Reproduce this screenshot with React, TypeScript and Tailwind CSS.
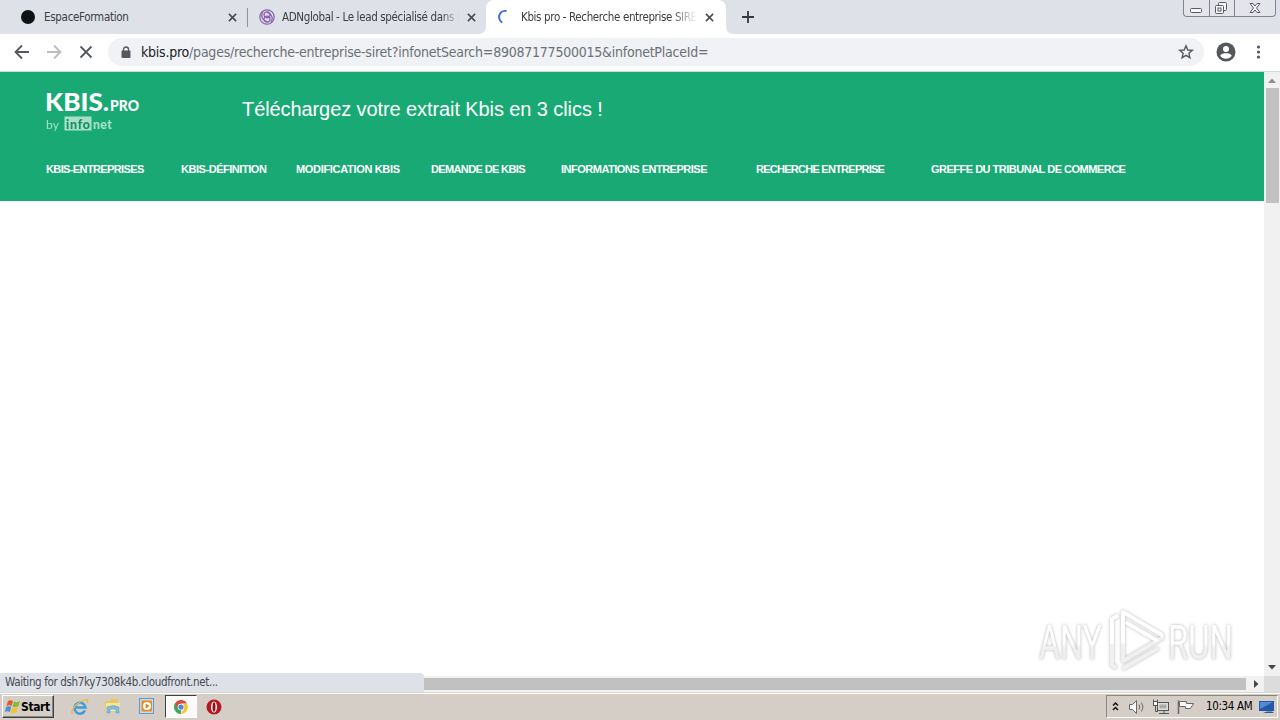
import React from 'react';

const ui = "font-['DejaVu_Sans_Condensed','DejaVu_Sans',sans-serif] [font-stretch:condensed] whitespace-nowrap";

function Cross({ className }: { className: string }) {
  return (
    <svg className={className} viewBox="0 0 10 10" stroke="#45494d" strokeWidth="1.7">
      <path d="M1 1L9 9M9 1L1 9" />
    </svg>
  );
}

function TabStrip() {
  return (
    <div className="relative flex h-[34px] w-full bg-[#dee1e8]">
      <div className="flex h-[34px] w-[247px] items-center pl-[21px]">
        <span className="size-[14px] rounded-full bg-[#0d1214]" />
        <span className={`${ui} ml-[9px] w-[184px] text-[11.5px] leading-4 tracking-[-0.3px] text-[#3c4043]`}>EspaceFormation</span>
        <Cross className="size-[9px]" />
      </div>
      <div className="mt-2 h-[19px] w-px bg-[#8d9198]" />
      <div className="flex h-[34px] w-[238px] items-center pl-[11px]">
        <svg className="size-4" viewBox="0 0 16 16" fill="none" stroke="#8a5fae" strokeWidth="1.2">
          <circle cx="8" cy="8" r="7.2" />
          <circle cx="8" cy="5.800" r="3" />
          <circle cx="8" cy="10.200" r="3" />
          <path d="M4 3C1 7 4 12 8 12.500M12 13C15 9 12 4 8 3.500" />
        </svg>
        <span className={`${ui} ml-[7px] w-[177px] overflow-hidden text-[11.5px] leading-4 tracking-[-0.35px] text-[#3c4043] [mask-image:linear-gradient(to_right,black_90%,transparent)]`}>ADNglobal - Le lead spécialisé dans la</span>
        <Cross className="ml-[8px] size-[9px]" />
      </div>
      <div className="relative flex h-[34px] w-[240px] items-center rounded-t-lg bg-white pl-[12px]">
        <svg className="absolute bottom-0 -left-2 size-2" viewBox="0 0 8 8"><path d="M8 0V8H0Q8 8 8 0" fill="white" /></svg>
        <svg className="absolute -right-2 bottom-0 size-2" viewBox="0 0 8 8"><path d="M0 0V8H8Q0 8 0 0" fill="white" /></svg>
        <svg className="size-4" viewBox="0 0 16 16" fill="none" stroke="#3b6fdc" strokeWidth="2"><path d="M8.500 2A6.200 6.200 0 0 0 4.300 13.500" /></svg>
        <span className={`${ui} ml-[7px] w-[176px] overflow-hidden text-[11.5px] leading-4 tracking-[-0.37px] text-[#3c4043] [mask-image:linear-gradient(to_right,black_85%,transparent)]`}>Kbis pro - Recherche entreprise SIRET</span>
        <Cross className="ml-[8px] size-[9px]" />
      </div>
      <svg className="mt-[11px] ml-4 size-3" viewBox="0 0 12 12" stroke="#35383c" strokeWidth="1.8"><path d="M6 0V12M0 6H12" /></svg>
      <div className="mr-[4px] ml-auto flex h-[17px] w-[93px] rounded-b-[4px] border border-t-0 border-[#80848e] bg-[#e3e5ea]">
        <svg className="h-4 w-[91px]" viewBox="0 0 91 16" fill="none" stroke="#565b65">
          <path d="M25.500 0V16M50.500 0V16" stroke="#80848e" />
          <rect x="6.500" y="8.500" width="11" height="4" rx="1" fill="#f6f6f8" />
          <rect x="34.500" y="2.500" width="8" height="8" rx="1" fill="#f6f6f8" />
          <rect x="31.500" y="5.500" width="8" height="8" rx="1" fill="#f6f6f8" />
          <rect x="34" y="8" width="3" height="3" />
          <path d="M66 3.500h3l2 2.500 2-2.500h3l-3.500 4.500 3.500 4.500h-3l-2-2.500-2 2.500h-3l3.500-4.500z" fill="#f6f6f8" />
        </svg>
      </div>
    </div>
  );
}

function Toolbar() {
  return (
    <div className="flex h-[38px] w-full items-center border-b border-[#c9dfd6] bg-white pb-px">
      <svg className="ml-[14px] h-4 w-20" viewBox="0 0 80 16" fill="none" strokeWidth="1.8">
        <path d="M15 8H2M8 1.500L1.500 8L8 14.500" stroke="#54575b" />
        <path d="M33 8H46M40 1.500L46.500 8L40 14.500" stroke="#bbbdc0" />
        <path d="M66.500 2.500L77.500 13.500M77.500 2.500L66.500 13.500" stroke="#54575b" />
      </svg>
      <div className="ml-[14px] flex h-[28px] w-[1096px] items-center rounded-full bg-[#f0f2f5] pl-[13px]">
        <svg className="h-3 w-[10px]" viewBox="0 0 10 12"><path d="M2.500 5V3.500a2.500 2.500 0 0 1 5 0V5" fill="none" stroke="#55585c" strokeWidth="1.400" /><rect x=".5" y="4.500" width="9" height="7.500" rx="1" fill="#55585c" /></svg>
        <span className="ml-[10px] font-['DejaVu_Sans_Condensed','DejaVu_Sans',sans-serif] text-[14px] font-extralight tracking-[-0.23px] whitespace-nowrap text-[#6c7076] [font-stretch:condensed]">
          <span className="text-[#202124]">kbis.pro</span>/pages/recherche-entreprise-siret?infonetSearch=89087177500015&amp;infonetPlaceId=
        </span>
        <svg className="mr-[10px] ml-auto size-4" viewBox="0 0 16 16" fill="none" stroke="#55585c" strokeWidth="1.400"><path d="M8 1.800L9.800 6 14.300 6.400 10.900 9.300 11.900 13.700 8 11.400 4.100 13.700 5.100 9.300 1.700 6.400 6.200 6Z" /></svg>
      </div>
      <svg className="ml-3 size-5" viewBox="0 0 20 20"><circle cx="10" cy="10" r="9.500" fill="#54575b" /><circle cx="10" cy="7" r="3" fill="white" /><path d="M4.200 13.700C5 11.500 8 11.200 10 11.200S15 11.500 15.800 13.700A7 7 0 0 1 4.200 13.700" fill="white" /></svg>
      <svg className="ml-[20px] h-4 w-[5px]" viewBox="0 0 5 16" fill="#54575b"><circle cx="2.500" cy="3" r="1.600" /><circle cx="2.500" cy="8" r="1.600" /><circle cx="2.500" cy="13" r="1.600" /></svg>
    </div>
  );
}

const nav: [string, string][] = [
  ['KBIS-ENTREPRISES', 'w-[135px] tracking-[-0.62px]'],
  ['KBIS-DÉFINITION', 'w-[115px] tracking-[-0.46px]'],
  ['MODIFICATION KBIS', 'w-[135px] tracking-[-0.32px]'],
  ['DEMANDE DE KBIS', 'w-[130px] tracking-[-0.63px]'],
  ['INFORMATIONS ENTREPRISE', 'w-[195px] tracking-[-0.5px]'],
  ['RECHERCHE ENTREPRISE', 'w-[175px] tracking-[-0.74px]'],
  ['GREFFE DU TRIBUNAL DE COMMERCE', 'w-[220px] tracking-[-0.5px]'],
];

function SiteHeader() {
  return (
    <header className="h-[129px] bg-[#19a974] pl-[46px] text-white">
      <div className="flex h-[88px] items-start">
        <svg className="mt-[12px] h-[52px] w-[196px] overflow-visible" viewBox="0 -4 196 52" fill="white" fontFamily="Lato, sans-serif" fontWeight="900">
          <text x="-1" y="22.500" fontSize="25" textLength="64" lengthAdjust="spacingAndGlyphs">KBIS.</text>
          <text x="64" y="22.500" fontSize="14.500" textLength="29" lengthAdjust="spacingAndGlyphs">PRO</text>
          <g opacity=".62">
            <text x="0" y="40.500" fontSize="12" textLength="13" fontWeight="400">by</text>
            <rect x="18.500" y="28.500" width="27" height="14" />
            <text x="20" y="40.500" fontSize="12.500" textLength="24" fill="#118257">info</text>
            <text x="47" y="40.500" fontSize="12.500" textLength="19">net</text>
          </g>
        </svg>
        <h1 className="mt-[24px] font-['Liberation_Sans',sans-serif] text-[20px] leading-[26px] tracking-[-0.09px] whitespace-nowrap">Téléchargez votre extrait Kbis en 3 clics !</h1>
      </div>
      <nav className="flex font-['Liberation_Sans',sans-serif] text-[11px] leading-[18px] font-bold whitespace-nowrap">
        {nav.map(([label, layout]) => <a key={label} className={layout}>{label}</a>)}
      </nav>
    </header>
  );
}

function Watermark() {
  return (
    <svg className="h-[74px] w-[206px] [filter:drop-shadow(0_0_1.5px_#b4b4b4)]" viewBox="0 0 206 74" fontFamily="Roboto, sans-serif">
      <defs>
        <linearGradient id="fade" x1="0" y1="0" x2="0" y2="1"><stop offset=".5" stopColor="#fff" /><stop offset=".6" stopColor="#f0f0f0" /></linearGradient>
      </defs>
      <g fill="url(#fade)" fontSize="49" fontWeight="400">
        <text x="7" y="59" textLength="63" lengthAdjust="spacingAndGlyphs">ANY</text>
        <text x="136" y="59" textLength="65" lengthAdjust="spacingAndGlyphs">RUN</text>
      </g>
      <g fill="none" strokeWidth="4" strokeLinecap="round" strokeLinejoin="round">
        <path d="M80 42V65L83 67M91 42V61L130 38M92 68L125 49" stroke="#f0f0f0" />
        <path d="M85 16L80 19V42M91 42V12L130 35M95 23L124 40" stroke="#fff" />
      </g>
    </svg>
  );
}

function Taskbar() {
  return (
    <div className="flex h-[28px] w-full items-center border-t border-[#d8d8d0] bg-[#d5cec7] shadow-[inset_0_1px_0_#fffefa]">
      <div className="ml-[2px] flex h-[23px] w-[52px] items-center border border-t-white border-r-[#404040] border-b-[#404040] border-l-white shadow-[inset_-1px_-1px_0_#8b867f]">
        <svg className="ml-px h-4 w-[17px]" viewBox="0 0 17 16">
          <path d="M4 2Q6.500 .5 9 2L7.500 7Q5 5.500 2.500 7Z" fill="#e65827" />
          <path d="M10 2.500Q13 4 16 2L14.500 7Q11.500 9 8.500 7.500Z" fill="#87b936" />
          <path d="M2.200 8Q4.800 6.500 7.200 8L5.800 13Q3.300 11.500 .8 13Z" fill="#4a8fd8" />
          <path d="M8.200 8.500Q11 10 14 8L12.600 13Q9.800 15 6.800 13.500Z" fill="#f3c22c" />
        </svg>
        <span className={`${ui} text-[12px] font-bold tracking-[-0.4px] text-black`}>Start</span>
      </div>
      <svg className="ml-[17px] size-[18px]" viewBox="0 0 18 18" fill="none">
        <path d="M14 12.500A5.500 5.500 0 1 1 14.500 9.500H4" stroke="#3f9dde" strokeWidth="2.500" />
        <path d="M3 15C-2 17 2 8 9 4S18 1 16 5" stroke="#e6b84c" strokeWidth="1.300" />
      </svg>
      <svg className="ml-[15px] size-[17px]" viewBox="0 0 17 17">
        <path d="M1 3H6L7 1H14V13H1Z" fill="#e9c75f" /><path d="M2 5H16V13H2Z" fill="#f8e49b" />
        <path d="M3 15V9Q9 6 15 9V15H12V11H6V15Z" fill="#80bddf" stroke="#5796bb" strokeWidth=".5" />
      </svg>
      <svg className="ml-[18px] size-[17px]" viewBox="0 0 17 17">
        <rect x=".5" y=".5" width="14" height="15" fill="#bfdcf2" stroke="#6598c5" /><rect x="2.500" y="2.500" width="10.500" height="11" rx="1" fill="#ef8b1e" /><circle cx="8" cy="8" r="4" fill="#fff" /><path d="M6.700 5.500L10.500 8L6.700 10.500Z" fill="#e67b13" />
      </svg>
      <div className="ml-[9px] flex h-[23px] w-[32px] items-center justify-center border border-t-[#404040] border-r-white border-b-white border-l-[#404040] bg-[#fafafa]">
        <svg className="size-[14px]" viewBox="0 0 16 16">
          <path d="M8 8V16A8 8 0 0 1 1.070 4Z" fill="#43a45a" />
          <path d="M8 4.500H15A8 8 0 0 1 8 16L11 10Z" fill="#f7c52c" /><path d="M1.070 4L5 10L8 8V4H15A8 8 0 0 0 1.070 4" fill="#dc4937" />
          <circle cx="8" cy="8" r="3.800" fill="white" /><circle cx="8" cy="8" r="3" fill="#4b87df" />
        </svg>
      </div>
      <svg className="ml-[9px] size-4" viewBox="0 0 16 16"><circle cx="8" cy="8" r="7.500" fill="#b41821" /><ellipse cx="8" cy="8" rx="3" ry="5.500" fill="#fff" /><ellipse cx="8" cy="8" rx="1.500" ry="4.800" fill="#8f111a" /></svg>
      <div className="mr-[2px] ml-auto flex h-[23px] w-[172px] items-center border border-t-[#8b867f] border-r-white border-b-white border-l-[#8b867f]">
        <svg className="h-5 w-[94px]" viewBox="0 0 94 20" fill="none" stroke="#6a6a6a">
          <path d="M6 8.500L8.500 6L11 8.500M6 13L8.500 10.500L11 13" stroke="#111" strokeWidth="1.500" />
          <path d="M22.500 7.500H25.500L29.500 3.500V16.500L25.500 12.500H22.500Z" fill="#fafafa" />
          <path d="M32 7.500Q33.500 10 32 12.500M34.500 5.500Q37.500 10 34.500 14.500" />
          <rect x="50.500" y="5.500" width="11" height="8" fill="#ddd" stroke="#555" /><rect x="52.500" y="7.500" width="7" height="4" fill="#aaa" stroke="none" /><path d="M52 16.500H62M57 14V16M46.500 2.500V4M50.500 2.500V4M48.500 8V14.500H51" stroke="#555" /><rect x="46.500" y="4.500" width="4" height="4" fill="#fafafa" stroke="#555" />
          <path d="M71.500 3.500V17" stroke="#666" strokeWidth="1.500" /><path d="M72.500 4.500H79.500V6.500H86.500L83.500 11.500H78.500V9.500H72.500Z" fill="#fafafa" />
        </svg>
        <span className={`${ui} ml-[5px] w-[47px] text-[11.5px] tracking-[-0.35px] text-black`}>10:34 AM</span>
        <svg className="ml-[6px] size-4" viewBox="0 0 16 16"><path d="M0 2H15V12H0Z" fill="#2358aa" /><path d="M1 3H14L1 10Z" fill="#528bd1" /><path d="M4 14L8 12.500H13L15 14Z" fill="#30588b" /></svg>
      </div>
    </div>
  );
}

export default function App() {
  return (
    <div className="flex h-[720px] w-[1280px] flex-col overflow-hidden bg-white">
      <TabStrip />
      <Toolbar />
      <div className="flex h-[604px]">
        <main className="flex w-[1264px] flex-col bg-white">
          <SiteHeader />
          <div className="mt-auto mr-[26px] mb-[2px] flex justify-end"><Watermark /></div>
        </main>
        <div className="flex w-4 flex-col items-center bg-[#f1f1f1]">
          <svg className="h-4 w-4" viewBox="0 0 16 16"><path d="M4 11L8 6.500L12 11Z" fill="#8e8e8e" /></svg>
          <div className="h-[115px] w-[13px] bg-[#c1c1c1]" />
          <svg className="mt-auto h-[17px] w-4" viewBox="0 0 16 17"><path d="M4 6L8 10.500L12 6Z" fill="#454545" /></svg>
        </div>
      </div>
      <div className="relative flex h-4 items-center bg-[#f1f1f1]">
        <div className="h-[12px] w-[1246px] bg-[#c1c1c1]" />
        <svg className="ml-[2px] size-4" viewBox="0 0 16 16"><path d="M6 4L10.500 8L6 12Z" fill="#454545" /></svg>
        <div className="ml-auto size-4 bg-[#dcdcdc]" />
        <div className="absolute bottom-0 left-0 flex h-[19px] w-[424px] items-center rounded-tr-[4px] bg-[#dee1e8] pt-px pl-[5px]">
          <span className={`${ui} text-[11.5px] tracking-[-0.35px] text-[#46494f]`}>Waiting for dsh7ky7308k4b.cloudfront.net...</span>
        </div>
      </div>
      <Taskbar />
    </div>
  );
}
